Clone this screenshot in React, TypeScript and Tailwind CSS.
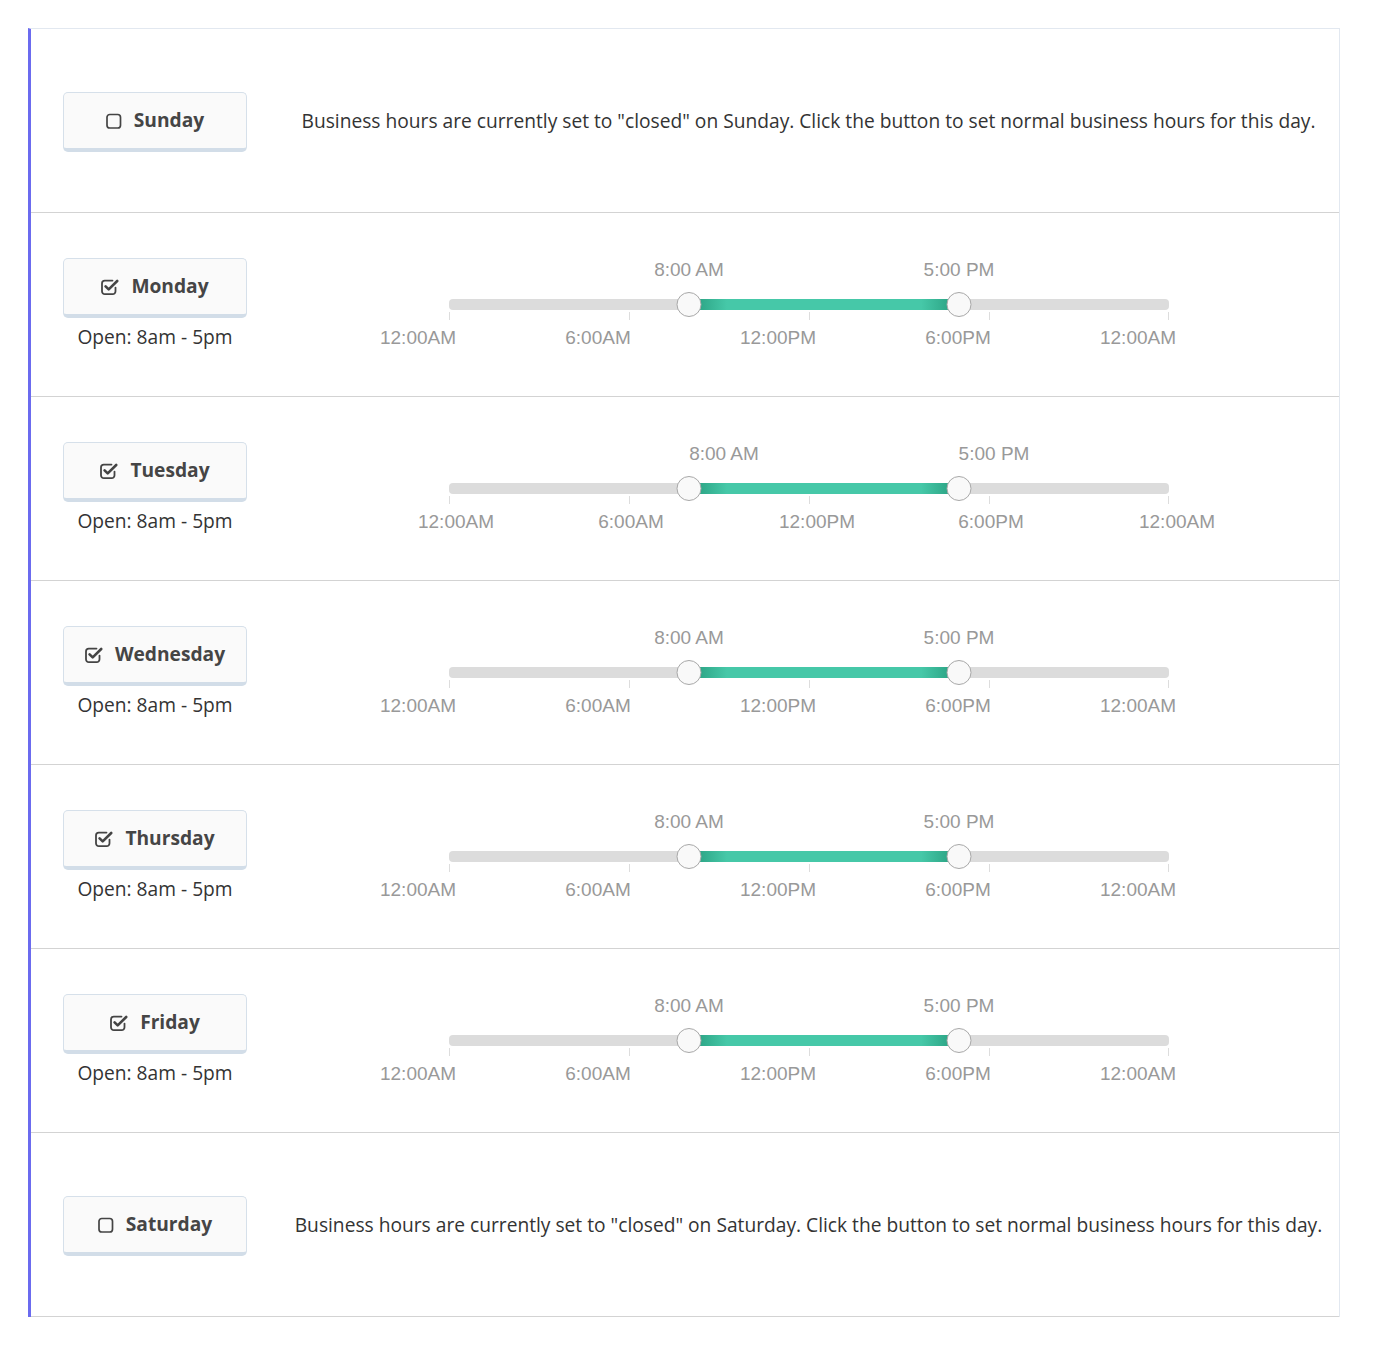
import React from "react";

const OPEN_SANS = "font-['Open_Sans','Noto_Sans',sans-serif]";
const ARIAL = "font-['Liberation_Sans',Arial,sans-serif]";

const TRACK_W = 720;
const TICKS = ["12:00AM", "6:00AM", "12:00PM", "6:00PM", "12:00AM"];

type Day = {
  name: string;
  open: boolean;
  // label offsets, this is how the original plugin happened to render them
  tickShift?: number[];
  handleShift?: number;
};

const DAYS: Day[] = [
  { name: "Sunday", open: false },
  { name: "Monday", open: true, tickShift: [-31, -31, -31, -31, -31], handleShift: 0 },
  { name: "Tuesday", open: true, tickShift: [7, 2, 8, 2, 8], handleShift: 35 },
  { name: "Wednesday", open: true, tickShift: [-31, -31, -31, -31, -31], handleShift: 0 },
  { name: "Thursday", open: true, tickShift: [-31, -31, -31, -31, -31], handleShift: 0 },
  { name: "Friday", open: true, tickShift: [-31, -31, -31, -31, -31], handleShift: 0 },
  { name: "Saturday", open: false },
];

const SquareIcon = () => (
  <svg width="16" height="16" viewBox="0 0 16 16" fill="none">
    <rect x="1" y="1.5" width="13.5" height="13.5" rx="2.8" stroke="#444" strokeWidth="1.7" />
  </svg>
);

const CheckSquareIcon = () => (
  <svg width="18" height="16" viewBox="0 0 18 16" fill="none">
    <path d="M11.5 1.6H3.8A2.8 2.8 0 0 0 1 4.4v7.9A2.8 2.8 0 0 0 3.8 15.1h7.9a2.8 2.8 0 0 0 2.8-2.8V8.6" stroke="#444" strokeWidth="1.8" strokeLinecap="round" />
    <path d="M4.6 7.3l3.1 3.1L16.2 2" stroke="#444" strokeWidth="2.6" strokeLinecap="round" strokeLinejoin="round" />
  </svg>
);

function DayButton({ day }: { day: Day }) {
  return (
    <button
      className={`w-[184px] h-[60px] flex items-center justify-center gap-[12px] rounded-[5px] bg-[#fafafa] border border-[#d6e0ea] border-b-[4px] border-b-[#d2dde8] ${OPEN_SANS} text-[19.2px] font-bold text-[#454545]`}
    >
      {day.open ? <CheckSquareIcon /> : <SquareIcon />}
      <span>{day.name}</span>
    </button>
  );
}

function HoursSlider({ day }: { day: Day }) {
  const from = 8;
  const to = 17;
  const x1 = (TRACK_W * from) / 24;
  const x2 = (TRACK_W * to) / 24;
  const hs = day.handleShift ?? 0;
  return (
    <div className={`relative ml-[171px] w-[720px] h-full ${ARIAL} text-[19px] text-[#999]`}>
      {/* handle labels */}
      <span className="absolute top-[43px] -translate-x-1/2 whitespace-nowrap leading-[28px]" style={{ left: x1 + hs }}>
        8:00 AM
      </span>
      <span className="absolute top-[43px] -translate-x-1/2 whitespace-nowrap leading-[28px]" style={{ left: x2 + hs }}>
        5:00 PM
      </span>
      {/* track */}
      <div className="absolute left-0 top-[86px] w-[720px] h-[11px] rounded-[4px] bg-[#dcdcdc]" />
      <div
        className="absolute top-[86px] h-[11px] bg-[linear-gradient(to_right,#259a7b,#46c8a8_14%,#46c8a8_86%,#259a7b)]"
        style={{ left: x1, width: x2 - x1 }}
      />
      {/* ticks */}
      {TICKS.map((t, i) => (
        <div key={"k" + i} className="absolute top-[99px] w-px h-[8px] bg-[#dddddd]" style={{ left: i * 180 - (i === 4 ? 1 : 0) }} />
      ))}
      {TICKS.map((t, i) => (
        <span
          key={"t" + i}
          className="absolute top-[111px] -translate-x-1/2 whitespace-nowrap leading-[28px]"
          style={{ left: i * 180 + (day.tickShift?.[i] ?? 0) }}
        >
          {t}
        </span>
      ))}
      {/* handles */}
      {[x1, x2].map((x, i) => (
        <div
          key={"h" + i}
          className="absolute top-[79px] w-[25px] h-[25px] -translate-x-1/2 rounded-full bg-[#f9f9f9] border border-[#a8a8a8]"
          style={{ left: x }}
        />
      ))}
    </div>
  );
}

export default function App() {
  return (
    <div className="bg-white min-h-screen pt-[28px] pl-[28px]">
      <div className="w-[1312px] border-l-[3px] border-l-[#6b6bef] border-t border-r border-[#e2e8f0]">
        {DAYS.map((day) => (
          <div key={day.name} className="flex h-[184px] border-b border-b-[#d3d3d3]">
            {day.open ? (
              <>
                <div className="w-[247px] shrink-0 pl-[32px] pt-[45px] flex flex-col items-start">
                  <DayButton day={day} />
                  <p className={`w-[184px] mt-[5px] text-center ${OPEN_SANS} text-[19.2px] leading-[27px] text-[#333]`}>
                    Open: 8am - 5pm
                  </p>
                </div>
                <HoursSlider day={day} />
              </>
            ) : (
              <>
                <div className="w-[247px] shrink-0 pl-[32px] pt-[63px]">
                  <DayButton day={day} />
                </div>
                <div className={`flex-1 flex items-center justify-center pt-[2px] ${OPEN_SANS} text-[19.2px] text-[#333] whitespace-nowrap`}>
                  Business hours are currently set to "closed" on {day.name}. Click the button to set normal business hours for this day.
                </div>
              </>
            )}
          </div>
        ))}
      </div>
    </div>
  );
}
